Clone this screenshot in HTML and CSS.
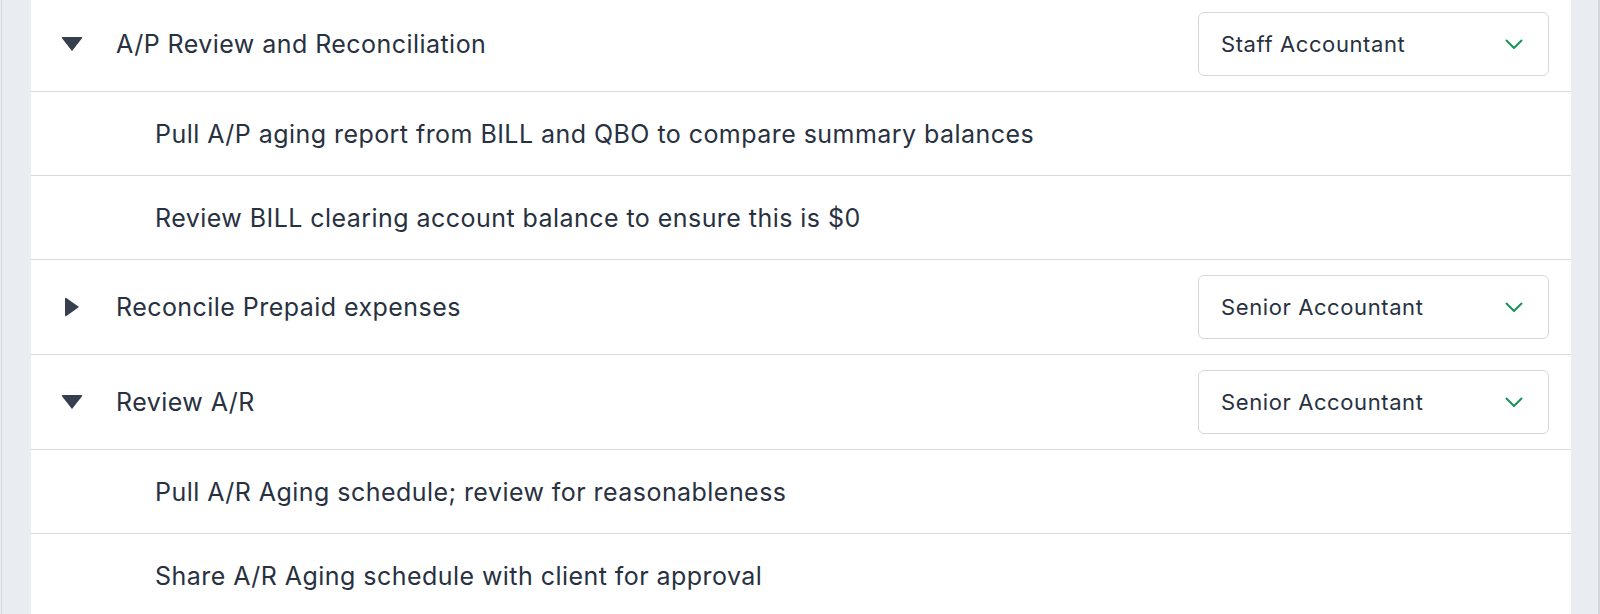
FILE: index.html
```html
<!DOCTYPE html>
<html lang="en">
<head>
  <meta charset="UTF-8">
  <title>Close Checklist</title>
  <link rel="stylesheet" href="styles.css">
</head>
<body>
  <div class="frame">
    <div class="panel">
      <ul class="task-list">
        <!-- A/P -->
        <li class="task-row task-head">
          <span class="caret caret-open"></span>
          <span class="task-title">A/P Review and Reconciliation</span>
          <div class="role-select">
            <span>Staff Accountant</span>
            <svg viewBox="0 0 18 11" class="chevron"><path d="M1.5 1.5L9 9L16.5 1.5"/></svg>
          </div>
        </li>
        <li class="task-row task-sub">
          <span class="task-title">Pull A/P aging report from BILL and QBO to compare summary balances</span>
        </li>
        <li class="task-row task-sub">
          <span class="task-title">Review BILL clearing account balance to ensure this is $0</span>
        </li>

        <!-- Prepaid -->
        <li class="task-row task-head">
          <span class="caret caret-closed"></span>
          <span class="task-title">Reconcile Prepaid expenses</span>
          <div class="role-select">
            <span>Senior Accountant</span>
            <svg viewBox="0 0 18 11" class="chevron"><path d="M1.5 1.5L9 9L16.5 1.5"/></svg>
          </div>
        </li>

        <!-- A/R -->
        <li class="task-row task-head">
          <span class="caret caret-open"></span>
          <span class="task-title">Review A/R</span>
          <div class="role-select">
            <span>Senior Accountant</span>
            <svg viewBox="0 0 18 11" class="chevron"><path d="M1.5 1.5L9 9L16.5 1.5"/></svg>
          </div>
        </li>
        <li class="task-row task-sub">
          <span class="task-title">Pull A/R Aging schedule; review for reasonableness</span>
        </li>
        <li class="task-row task-sub">
          <span class="task-title">Share A/R Aging schedule with client for approval</span>
        </li>
      </ul>
    </div>
  </div>
</body>
</html>
```

FILE: styles.css
```css
:root {
  --bg: #e9edf2;
  --edge: #d2d8df;
  --line: #d6dbe2;
  --text: #28313f;
  --caret: #363f4e;
  --green: #16955a;
}
* {
  margin: 0;
  padding: 0;
  box-sizing: border-box;
}
body {
  font-family: Inter, "Noto Sans", sans-serif;
  color: var(--text);
  background: var(--bg);
  height: 100vh;
  overflow: hidden;
}
/* outer gutters */
.frame {
  height: 100%;
  margin-left: 1px;
  border-left: 1px solid var(--edge);
  border-right: 2px solid var(--edge);
  padding: 0 27px 0 29px;
  display: flex;
}
.panel {
  flex: 1;
  background: #fff;
  overflow: hidden;
}
.task-list {
  list-style: none;
  margin-top: -3px;
}
.task-row {
  display: flex;
  align-items: center;
  border-bottom: 1px solid var(--line);
  font-size: 25px;
  letter-spacing: 0.45px;
}
.task-head {
  height: 95px;
  padding: 0 22px 0 30px;
}
.task-sub {
  height: 84px;
  padding-left: 124px;
}
.task-title {
  flex: 1;
}
/* expand / collapse carets */
.caret {
  width: 22px;
  height: 22px;
  margin-right: 33px;
  display: flex;
  align-items: center;
  justify-content: center;
}
.caret::before {
  content: '';
  display: block;
  width: 0;
  height: 0;
}
.caret-open::before {
  border-left: 11px solid transparent;
  border-right: 11px solid transparent;
  border-top: 14px solid var(--caret);
  border-radius: 2px;
}
.caret-closed::before {
  border-top: 10.5px solid transparent;
  border-bottom: 10.5px solid transparent;
  border-left: 14px solid var(--caret);
  border-radius: 2px;
}
/* role dropdown */
.role-select {
  width: 351px;
  height: 64px;
  border: 1px solid #d3d8df;
  border-radius: 6px;
  display: flex;
  align-items: center;
  justify-content: space-between;
  padding: 0 25px 0 22px;
  font-size: 22px;
  letter-spacing: 0.6px;
}
.chevron {
  width: 18px;
  height: 11px;
  fill: none;
  stroke: var(--green);
  stroke-width: 2;
  stroke-linecap: round;
  stroke-linejoin: round;
}
```
